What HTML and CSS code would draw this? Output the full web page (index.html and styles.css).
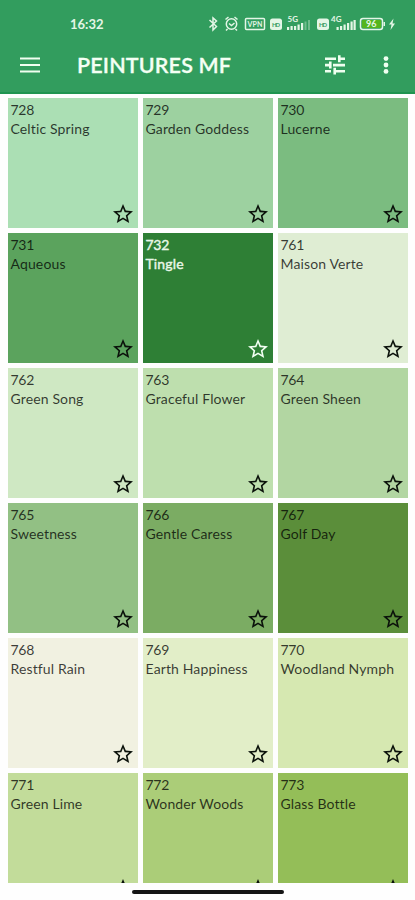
FILE: index.html
```html
<!DOCTYPE html>
<html lang="en">
<head>
  <meta charset="UTF-8" />
  <meta name="viewport" content="width=device-width, initial-scale=1.0"/>
  <title>PEINTURES MF</title>
  <link rel="stylesheet" href="styles.css">
</head>
<body>

  <!-- Shared star icon -->
  <svg class="sprite" width="0" height="0">
    <symbol id="star" viewBox="0 0 24 24">
      <path d="M22 9.24l-7.19-.62L12 2 9.19 8.63 2 9.24l5.46 4.73L5.82 21 12 17.27 18.18 21l-1.63-7.03L22 9.24zM12 15.4l-3.76 2.27 1-4.28-3.32-2.88 4.38-.38L12 6.1l1.71 4.04 4.38.38-3.32 2.88 1 4.28L12 15.4z"/>
    </symbol>
  </svg>

  <!-- Header -->
  <header class="header">
    <div class="status-bar">
      <span class="time">16:32</span>
      <svg class="status-icons" width="190" height="20" viewBox="0 0 190 20">
        <g fill="none" stroke="#e4f6e6" stroke-width="1.5">
          <path d="M1.500 8l7 6.500L5 18V6l3.500 3-7 6.500"/>
          <circle cx="23.500" cy="12" r="5.200"/>
          <path d="M17.500 7.500l3-2.500M29.500 7.500l-3-2.500M21 11.500l2.500 2 3-2.500M19.500 17l-1.500 1.500M27.500 17l1.500 1.500"/>
          <rect x="37.500" y="6.500" width="19" height="11" rx="1"/>
          <rect x="152.500" y="6.500" width="22" height="11" rx="2.500"/>
        </g>
        <rect x="154" y="8" width="19" height="8" rx="1" fill="#54b51d"/>
        <g fill="#e4f6e6">
          <rect x="62" y="6.500" width="12" height="11.500" rx="2.500"/>
          <rect x="109" y="6.500" width="12" height="11.500" rx="2.500"/>
          <path d="M79 15h2.200v3H79zM82.500 14h2.200v4h-2.200zM86 14h2.200v4H86zM89.500 12.500h2.200V18h-2.200zM93 11h2.200v7H93z"/>
          <path d="M96.500 9.500h2V18h-2zM100 8h2v10h-2z" opacity=".35"/>
          <path d="M128.500 15h2.200v3h-2.200zM132 14h2.200v4H132zM135.500 12.500h2.200V18h-2.200zM139 11h2.200v7H139zM142.500 9.500h2.200V18h-2.200zM145.500 8h2.200v10h-2.200z"/>
          <path d="M175.500 10h1.500v4h-1.500zM185.500 6.500l-4.500 6h2.500l-1 5.500 4.500-6.500h-2.500z"/>
        </g>
        <g class="tiny" fill="#e4f6e6">
          <text x="39.500" y="14.800" font-size="7" textLength="15">VPN</text>
          <text x="79.500" y="9.700" font-size="8">5G</text>
          <text x="123" y="9.700" font-size="8">4G</text>
          <text x="158" y="15" font-size="9">96</text>
        </g>
        <g class="tiny" fill="#329d5e">
          <text x="64" y="14.500" font-size="6" textLength="8">HD</text>
          <text x="111" y="14.500" font-size="6" textLength="8">HD</text>
        </g>
      </svg>
    </div>
    <div class="toolbar">
      <svg class="menu-icon" width="30" height="30" viewBox="0 0 30 30">
        <path d="M5 8.500h20M5 15h20M5 21.500h20"/>
      </svg>
      <h1>PEINTURES MF</h1>
      <svg class="tune-icon" width="24" height="24" viewBox="0 0 24 24">
        <path d="M2 17v2.600h6V17H2zM2 4.400V7h11V4.400H2zm11 17.200v-2h9V17h-9v-2.200h-2.600v6.800H13zM6 8.600v2.200H2v2.600h4v2.200h2.600v-7H6zm16 4.800v-2.600H10v2.600h12zM15 9.200h2.600V7H22V4.400h-4.400V2.200H15v7z"/>
      </svg>
      <svg class="more-icon" width="8" height="24" viewBox="0 0 8 24">
        <circle cx="4" cy="5.600" r="2.400"/>
        <circle cx="4" cy="12" r="2.400"/>
        <circle cx="4" cy="18.400" r="2.400"/>
      </svg>
    </div>
  </header>

  <!-- Color Tiles -->
  <main class="colors">
    <div class="tile c728"><div class="num">728</div>Celtic Spring<svg class="star"><use href="#star"/></svg></div>
    <div class="tile c729"><div class="num">729</div>Garden Goddess<svg class="star"><use href="#star"/></svg></div>
    <div class="tile c730"><div class="num">730</div>Lucerne<svg class="star"><use href="#star"/></svg></div>
    <div class="tile c731"><div class="num">731</div>Aqueous<svg class="star"><use href="#star"/></svg></div>
    <div class="tile c732 dark"><div class="num">732</div>Tingle<svg class="star"><use href="#star"/></svg></div>
    <div class="tile c761"><div class="num">761</div>Maison Verte<svg class="star"><use href="#star"/></svg></div>
    <div class="tile c762"><div class="num">762</div>Green Song<svg class="star"><use href="#star"/></svg></div>
    <div class="tile c763"><div class="num">763</div>Graceful Flower<svg class="star"><use href="#star"/></svg></div>
    <div class="tile c764"><div class="num">764</div>Green Sheen<svg class="star"><use href="#star"/></svg></div>
    <div class="tile c765"><div class="num">765</div>Sweetness<svg class="star"><use href="#star"/></svg></div>
    <div class="tile c766"><div class="num">766</div>Gentle Caress<svg class="star"><use href="#star"/></svg></div>
    <div class="tile c767"><div class="num">767</div>Golf Day<svg class="star"><use href="#star"/></svg></div>
    <div class="tile c768"><div class="num">768</div>Restful Rain<svg class="star"><use href="#star"/></svg></div>
    <div class="tile c769"><div class="num">769</div>Earth Happiness<svg class="star"><use href="#star"/></svg></div>
    <div class="tile c770"><div class="num">770</div>Woodland Nymph<svg class="star"><use href="#star"/></svg></div>
    <div class="tile c771"><div class="num">771</div>Green Lime<svg class="star"><use href="#star"/></svg></div>
    <div class="tile c772"><div class="num">772</div>Wonder Woods<svg class="star"><use href="#star"/></svg></div>
    <div class="tile c773"><div class="num">773</div>Glass Bottle<svg class="star"><use href="#star"/></svg></div>
  </main>

  <!-- Gesture bar -->
  <footer class="gesture"><div class="gesture-bar"></div></footer>

</body>
</html>
```
FILE: styles.css
```css
* {
  box-sizing: border-box;
}

body {
  font-family: Lato, "Open Sans", sans-serif;
  margin: 0;
  height: 900px;
  display: flex;
  flex-direction: column;
  background-color: #fefefe;
  overflow: hidden;
}

.sprite {
  position: absolute;
}

/* Header */
.header {
  flex: none;
  height: 94px;
  background-color: #329d5e;
  border-bottom: 2px solid #1f9450;
  color: #f4fff4;
}

.status-bar {
  display: flex;
  justify-content: space-between;
  height: 44px;
  padding: 12px 17px 0 70px;
}

.time {
  font-size: 13px;
  line-height: 25px;
  font-weight: bold;
  color: #e4f6e6;
}

.tiny {
  font-family: Lato, sans-serif;
  font-weight: bold;
}

.toolbar {
  display: flex;
  align-items: center;
  height: 42px;
  padding: 0 25px 0 15px;
}

.menu-icon {
  stroke: #f0fff0;
  stroke-width: 2.2;
}

h1 {
  flex: 1;
  margin: 0 0 0 32px;
  font-size: 21.5px;
  line-height: 28px;
  font-weight: 600;
  letter-spacing: 0.15px;
  -webkit-text-stroke: 0.3px #f4fff4;
}

.tune-icon,
.more-icon {
  fill: #effff0;
}

.more-icon {
  margin-left: 35px;
}

/* Color Tiles */
.colors {
  flex: none;
  display: grid;
  grid-template-columns: repeat(3, 130px);
  grid-auto-rows: 130px;
  gap: 5px;
  height: 789px;
  padding: 4px 8px 0;
  overflow: hidden;
}

.tile {
  position: relative;
  padding: 2px 0 0 2.5px;
  font-size: 14px;
  line-height: 19px;
  letter-spacing: 0.13px;
  white-space: nowrap;
  color: rgba(0, 0, 0, 0.76);
}

.num {
  letter-spacing: -0.3px;
}

.star {
  position: absolute;
  right: 3px;
  bottom: 2px;
  width: 24px;
  height: 24px;
  fill: #0b120b;
}

.dark {
  color: #e9f7e7;
  -webkit-text-stroke: 0.4px #e9f7e7;
}

.dark .star {
  fill: #f2fff2;
}

.c728 { background-color: #abdfb4; }
.c729 { background-color: #9dd1a0; }
.c730 { background-color: #7bbc80; }
.c731 { background-color: #5ba35d; }
.c732 { background-color: #2e7f35; }
.c761 { background-color: #dfedd3; }
.c762 { background-color: #cfe8c3; }
.c763 { background-color: #bedfae; }
.c764 { background-color: #b2d6a2; }
.c765 { background-color: #92c084; }
.c766 { background-color: #7bac63; }
.c767 { background-color: #5b8e3a; }
.c768 { background-color: #f1f1e1; }
.c769 { background-color: #e2eec8; }
.c770 { background-color: #d6e8b1; }
.c771 { background-color: #c2dc9a; }
.c772 { background-color: #abcd78; }
.c773 { background-color: #94be58; }

/* Gesture bar */
.gesture {
  flex: 1;
  padding: 7px 0 0 132px;
}

.gesture-bar {
  width: 152px;
  height: 4px;
  border-radius: 2px;
  background-color: #151515;
}
```
